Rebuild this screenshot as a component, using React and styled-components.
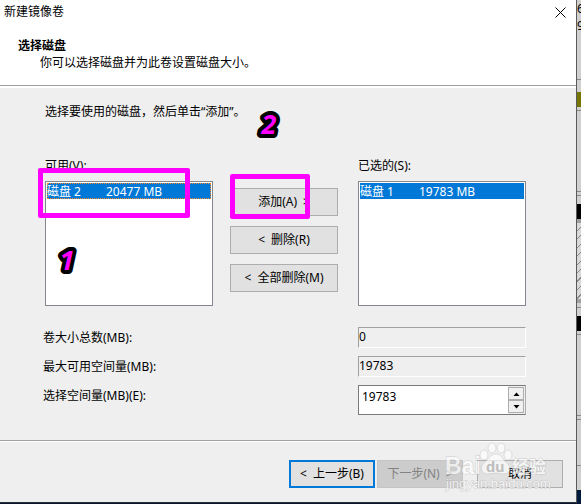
import React, { useState } from "react";
import styled, { createGlobalStyle } from "styled-components";

const GlobalStyle = createGlobalStyle`
	body {
		margin: 0;
		background: #0a1a33;
	}

	*, *::before, *::after {
		box-sizing: border-box;
	}

	body, button, input {
		font-family: "Noto Sans", "Noto Sans CJK SC", sans-serif;
		font-size: 12px;
		line-height: 16px;
		color: #000;
	}
`;

const Desktop = styled.div`
	display: grid;
	grid-template-columns: minmax(0, 1fr) 4px;
	min-height: 100vh;
	background: #0a1630;
	padding-bottom: 1px;
	overflow: hidden;
`;

const Dialog = styled.form`
	display: flex;
	flex-direction: column;
	background: #efefef;
	border-right: 1px solid #5a5a5a;
	border-bottom: 1px solid #2a2f3a;
`;

const TitleBar = styled.header`
	display: flex;
	justify-content: space-between;
	align-items: center;
	height: 24px;
	padding: 0 10px 0 4px;
	background: #fff;
`;

const Title = styled.h1`
	margin: 0;
	font-size: 12px;
	font-weight: 400;
`;

const CloseButton = styled.button`
	display: flex;
	padding: 0;
	border: none;
	background: none;
`;

const Heading = styled.section`
	height: 64px;
	padding: 14px 18px 0;
	background: #fff;
	border-bottom: 2px solid #fff;
	box-shadow: inset 0 -1px 0 #a0a0a0;
`;

const HeadingTitle = styled.h2`
	margin: 0;
	font-size: 12px;
	line-height: 16px;
	font-weight: 700;
`;

const HeadingText = styled.p`
	margin: 1px 0 0 22px;
`;

const Body = styled.main`
	flex: 1;
	padding: 16px 50px 25px 43px;
	border-bottom: 1px solid #a0a0a0;
`;

const Hint = styled.p`
	margin: 0 0 38px 2px;
`;

const Picker = styled.div`
	display: grid;
	grid-template-columns: minmax(0, 1fr) 111px minmax(0, 1fr);
	column-gap: 17px;
	padding-left: 2px;
`;

const Column = styled.div`
	position: relative;
`;

const ListLabel = styled.div`
	margin-bottom: 7px;
`;

const List = styled.ul`
	height: 125px;
	margin: 0;
	padding: 1px;
	list-style: none;
	background: #fff;
	border: 1px solid #828790;
`;

const ListItem = styled.li`
	display: flex;
	gap: 25px;
	padding-top: 2px;
	line-height: 14px;
	color: #fff;
	background: #0078d7;
	outline: ${props => (props.$focused ? "1px dotted #ff8728" : "none")};
	outline-offset: -1px;
`;

const Actions = styled.div`
	position: relative;
	display: flex;
	flex-direction: column;
	gap: 10px;
	padding: 30px 3px 0 0;
`;

const Button = styled.button`
	display: flex;
	align-items: center;
	justify-content: center;
	gap: 6px;
	width: ${props => props.$width || "100%"};
	height: 28px;
	padding: 0;
	white-space: nowrap;
	background: ${props => (props.disabled ? "#cccccc" : "#e1e1e1")};
	color: ${props => (props.disabled ? "#838383" : "#000")};
	border: ${props => (props.$primary ? "2px solid #0078d7" : "1px solid #adadad")};
	border-color: ${props => props.disabled && "#c4c4c4"};
`;

const Mark = styled.div`
	position: absolute;
	left: ${props => props.$left};
	top: ${props => props.$top};
	width: ${props => props.$width};
	height: ${props => props.$height};
	border: 5px solid #ff00ff;
	border-radius: 2px;
	pointer-events: none;
`;

const Step = styled.svg`
	position: absolute;
	left: ${props => props.$left};
	top: ${props => props.$top};
	width: 30px;
	height: 36px;
	pointer-events: none;

	text {
		font: italic 700 27px "Noto Sans", sans-serif;
		text-anchor: middle;
		fill: #ff00ff;
		stroke: #000;
		stroke-width: 8px;
		stroke-linejoin: round;
		paint-order: stroke;
	}
`;

const Fields = styled.div`
	display: flex;
	flex-direction: column;
	gap: 8px;
	margin-top: 21px;
`;

const Field = styled.div`
	display: flex;
	justify-content: space-between;
	align-items: flex-start;
`;

const FieldLabel = styled.label`
	padding-top: 3px;
`;

const Output = styled.output`
	width: 168px;
	height: 21px;
	padding: 1px 0;
	border: 1px solid;
	border-color: #a0a0a0 #fff #fff #a0a0a0;
`;

const Spinner = styled.div`
	display: flex;
	width: 168px;
	height: 30px;
	background: #fff;
	border: 1px solid #7a7a7a;
	border-right-color: #adadad;
`;

const SpinnerInput = styled.input`
	flex: 1;
	min-width: 0;
	padding: 0 3px 6px;
	border: none;
	outline: none;
	background: none;
`;

const SpinnerButtons = styled.div`
	display: flex;
	flex-direction: column;
	width: 17px;
	padding: 1px 1px 1px 0;
	background: #efefef;
`;

const SpinnerButton = styled.button`
	display: flex;
	flex: 1;
	align-items: center;
	justify-content: center;
	padding: 0;
	background: #f0f0f0;
	border: 1px solid #adadad;
`;

const Footer = styled.footer`
	position: relative;
	display: flex;
	justify-content: flex-end;
	height: 61px;
	padding: 18px 13px 0;
	border-top: 1px solid #fff;
`;

const ButtonPair = styled.div`
	display: flex;
	gap: 2px;
	margin-right: 14px;
`;

const Watermark = styled.svg`
	position: absolute;
	right: 25px;
	top: 0;
	width: 106px;
	height: 56px;
	opacity: .65;
	pointer-events: none;

	text {
		font-family: "Liberation Sans", "Noto Sans CJK SC", sans-serif;
		font-weight: 700;
		fill: #fff;
		stroke: #b8b8b8;
		stroke-width: 1px;
		paint-order: stroke;
	}
`;

const Behind = styled.div`
	display: flex;
	flex-direction: column;
	overflow: hidden;
	background: #d4d4d4;
`;

const Strip = styled.div`
	flex: ${props => props.$grow ? "1" : "none"};
	height: ${props => props.$height};
	background: ${props => props.$fill || "#d0d0d0"};
	border-bottom: ${props => (props.$line ? "1px solid #8a8a8a" : "none")};
	line-height: 17px;
`;

const hatch = "repeating-linear-gradient(135deg, #d8d8d8 0 5px, #888 5px 6px)";

const BackgroundWindow = () => (
	<Behind>
		<Strip $height="80px" $line>6<br />9</Strip>
		<Strip $height="12px" />
		<Strip $height="15px" $fill="#757500" />
		<Strip $height="4px" $line />
		<Strip $height="81px" $line />
		<Strip $height="4px" $line />
		<Strip $height="8px" />
		<Strip $height="15px" $fill="#000" />
		<Strip $height="4px" $fill="#a0a0a0" />
		<Strip $height="76px" $fill={hatch} />
		<Strip $height="4px" $fill="#a0a0a0" />
		<Strip $height="5px" $line />
		<Strip $height="8px" />
		<Strip $height="15px" $fill="#000" />
		<Strip $height="4px" $line />
		<Strip $height="81px" $line />
		<Strip $height="4px" $line />
		<Strip $height="46px" $line />
		<Strip $height="24px" />
		<Strip $fill="#001a3d" $grow />
	</Behind>
);

const Arrow = ({ down }) => (
	<svg width="7" height="4" viewBox="0 0 7 4">
		<path d={down ? "M.5 0H6.5L3.5 3.500Z" : "M.5 4H6.5L3.5 .5Z"} />
	</svg>
);

const BaiduMark = () => (
	<Watermark viewBox="0 0 106 56" aria-hidden="true">
		<text x="0" y="32" fontSize="23">Bai</text>
		<g fill="#fff" stroke="#bbb" strokeWidth=".6">
			<ellipse cx="39" cy="13" rx="4" ry="5" />
			<ellipse cx="47" cy="6" rx="4" ry="5" />
			<ellipse cx="56" cy="6" rx="4" ry="5" />
			<ellipse cx="63" cy="13" rx="4" ry="5" />
			<path d="M51 12C45 12 44 17 40 20C34 25 36 32 43 32Q51 30 58 32C66 32 67 25 61 20C57 17 57 12 51 12Z" />
		</g>
		<text x="41" y="30" fontSize="15" style={{ fill: "#aaa", stroke: "none" }}>du</text>
		<text x="67" y="31" fontSize="17">经验</text>
		<text x="1" y="46" fontSize="13" style={{ fontWeight: 400 }}>jingyan.baidu.com</text>
	</Watermark>
);

const App = () => {
	const [size, setSize] = useState("19783");
	const step = amount => setSize(String(Number(size) + amount));

	return (
		<Desktop>
			<GlobalStyle />
			<Dialog>
				<TitleBar>
					<Title>新建镜像卷</Title>
					<CloseButton type="button" aria-label="关闭">
						<svg width="11" height="11" viewBox="0 0 11 11" stroke="#000" strokeWidth="1">
							<path d="M.5 .5L10.500 10.500M10.500 .5L.5 10.500" />
						</svg>
					</CloseButton>
				</TitleBar>
				<Heading>
					<HeadingTitle>选择磁盘</HeadingTitle>
					<HeadingText>你可以选择磁盘并为此卷设置磁盘大小。</HeadingText>
				</Heading>
				<Body>
					<Hint>选择要使用的磁盘，然后单击“添加”。</Hint>
					<Picker>
						<Column>
							<ListLabel id="available">可用(V):</ListLabel>
							<List aria-labelledby="available">
								<ListItem $focused><span>磁盘 2</span><span>20477 MB</span></ListItem>
							</List>
							<Mark $left="-7px" $top="10px" $width="152px" $height="50px" />
							<Step $left="7px" $top="84px"><text x="15" y="28">1</text></Step>
						</Column>
						<Actions>
							<Button type="button"><span>添加(A)</span><span>&gt;</span></Button>
							<Button type="button"><span>&lt;</span><span>删除(R)</span></Button>
							<Button type="button"><span>&lt;</span><span>全部删除(M)</span></Button>
							<Mark $left="0px" $top="16px" $width="80px" $height="45px" />
							<Step $left="24px" $top="-52px"><text x="15" y="28">2</text></Step>
						</Actions>
						<Column>
							<ListLabel id="selected">已选的(S):</ListLabel>
							<List aria-labelledby="selected">
								<ListItem><span>磁盘 1</span><span>19783 MB</span></ListItem>
							</List>
						</Column>
					</Picker>
					<Fields>
						<Field>
							<FieldLabel htmlFor="total">卷大小总数(MB):</FieldLabel>
							<Output id="total">0</Output>
						</Field>
						<Field>
							<FieldLabel htmlFor="max">最大可用空间量(MB):</FieldLabel>
							<Output id="max">19783</Output>
						</Field>
						<Field>
							<FieldLabel htmlFor="size">选择空间量(MB)(E):</FieldLabel>
							<Spinner>
								<SpinnerInput id="size" value={size} onChange={e => setSize(e.target.value)} />
								<SpinnerButtons>
									<SpinnerButton type="button" aria-label="增加" onClick={() => step(1)}><Arrow /></SpinnerButton>
									<SpinnerButton type="button" aria-label="减少" onClick={() => step(-1)}><Arrow down /></SpinnerButton>
								</SpinnerButtons>
							</Spinner>
						</Field>
					</Fields>
				</Body>
				<Footer>
					<ButtonPair>
						<Button type="button" $width="86px" $primary><span>&lt;</span><span>上一步(B)</span></Button>
						<Button type="button" $width="86px" disabled><span>下一步(N)</span><span>&gt;</span></Button>
					</ButtonPair>
					<Button type="button" $width="86px">取消</Button>
					<BaiduMark />
				</Footer>
			</Dialog>
			<BackgroundWindow />
		</Desktop>
	);
};

export default App;
